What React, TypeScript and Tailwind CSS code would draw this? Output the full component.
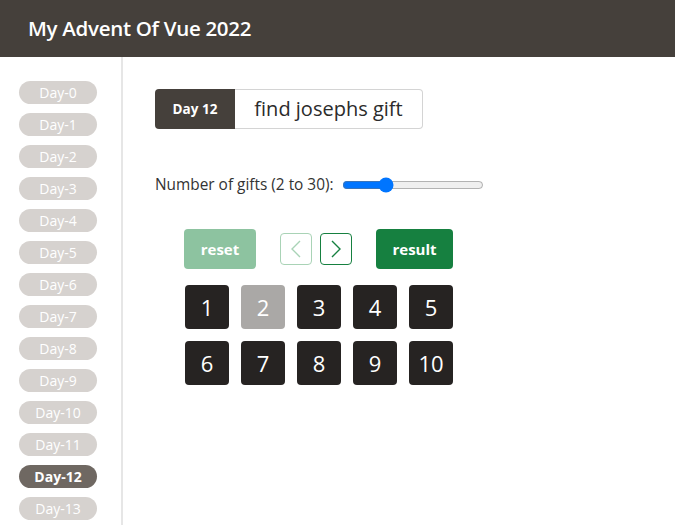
import React, { useState } from 'react';

const days = Array.from({ length: 14 }, (_, i) => i);

export default function App() {
    const [count, setCount] = useState(10);
    const active = 12;
    return (
        <div className="h-[525px] w-[675px] overflow-hidden bg-white flex flex-col" style={{ fontFamily: '"Open Sans", "Noto Sans", sans-serif' }}>
            <header className="h-[57px] shrink-0 bg-[#45403b] flex items-center px-[28px]">
                <h1 className="text-[20.5px] font-semibold text-white tracking-[-0.3px]">My Advent Of Vue 2022</h1>
            </header>
            <div className="flex flex-1 min-h-0">
                <aside className="w-[123px] shrink-0 border-r-2 border-[#e6e6e6] pt-[24px] flex flex-col items-start pl-[19px] gap-[9px]">
                    {days.map((d) => (
                        <button
                            key={d}
                            className={
                                d === active
                                    ? 'w-[78px] h-[23px] shrink-0 rounded-full bg-[#6f6862] text-white text-[14px] font-bold leading-[23px]'
                                    : 'w-[78px] h-[23px] shrink-0 rounded-full bg-[#d6d2cf] text-white text-[14px] leading-[23px]'
                            }
                        >
                            Day-{d}
                        </button>
                    ))}
                </aside>
                <main className="flex-1 pl-[32px] pt-[32px]">
                    <div className="flex h-[40px] w-max">
                        <div className="w-[80px] bg-[#45403b] rounded-l-[4px] flex items-center justify-center text-white text-[13.5px] font-bold">
                            Day 12
                        </div>
                        <div className="w-[188px] border border-l-0 border-[#d4d4d4] rounded-r-[4px] flex items-center justify-center text-[20px] text-[#2b2b2b] font-medium">
                            find josephs gift
                        </div>
                    </div>
                    <div className="mt-[44px] flex items-center gap-[8px] text-[15.4px] text-[#333]">
                        <label>Number of gifts (2 to 30):</label>
                        <input
                            type="range"
                            min={2}
                            max={30}
                            value={count}
                            onChange={(e) => setCount(Number(e.target.value))}
                            className="w-[142px] accent-[#0075ff]"
                        />
                    </div>
                    <div className="mt-[33px] ml-[29px] flex items-center">
                        <button className="w-[72px] h-[40px] rounded-[4px] bg-[#8dc3a0] text-white text-[15px] font-bold">reset</button>
                        <button className="ml-[24px] w-[32px] h-[32px] rounded-[4px] border border-[#a9d3b6] flex items-center justify-center">
                            <svg width="14" height="20" viewBox="0 0 14 20" fill="none" stroke="#a9d3b6" strokeWidth="1.4">
                                <path d="M11 2 L3 10 L11 18" />
                            </svg>
                        </button>
                        <button className="ml-[8px] w-[32px] h-[32px] rounded-[4px] border border-[#168040] flex items-center justify-center">
                            <svg width="14" height="20" viewBox="0 0 14 20" fill="none" stroke="#168040" strokeWidth="1.4">
                                <path d="M3 2 L11 10 L3 18" />
                            </svg>
                        </button>
                        <button className="ml-[24px] w-[77px] h-[40px] rounded-[4px] bg-[#168040] text-white text-[15px] font-bold">result</button>
                    </div>
                    <div className="mt-[16px] ml-[30px] grid grid-cols-[repeat(5,44px)] gap-[12px]">
                        {Array.from({ length: count }, (_, i) => i + 1).map((n) => (
                            <div
                                key={n}
                                className={
                                    n === 2
                                        ? 'h-[44px] rounded-[4px] bg-[#aaa8a6] text-white text-[22px] flex items-center justify-center'
                                        : 'h-[44px] rounded-[4px] bg-[#262322] text-white text-[22px] flex items-center justify-center'
                                }
                            >
                                {n}
                            </div>
                        ))}
                    </div>
                </main>
            </div>
        </div>
    );
}
